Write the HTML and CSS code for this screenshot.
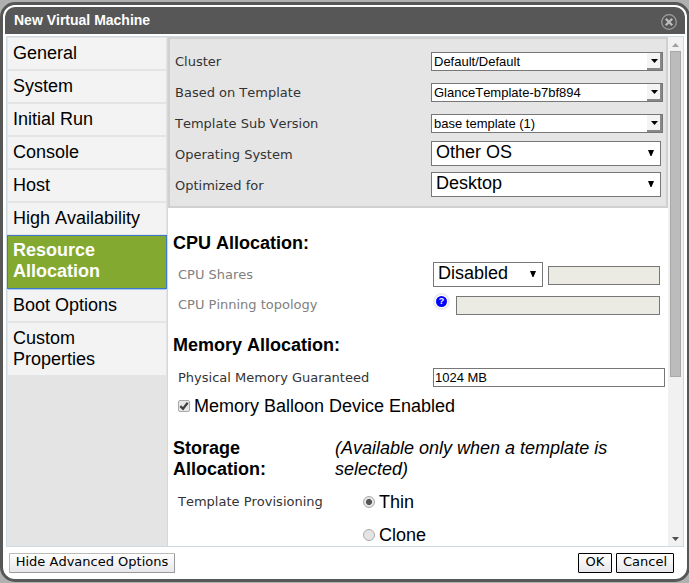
FILE: index.html
```html
<!DOCTYPE html>
<html lang="en">
<head>
<meta charset="utf-8">
<title>New Virtual Machine</title>
<link rel="stylesheet" href="styles.css">
</head>
<body>
<div class="dialog">
  <header class="titlebar">
    <span class="title">New Virtual Machine</span>
    <svg class="close" width="16" height="16" viewBox="0 0 16 16"><circle cx="8" cy="8" r="7.3" fill="#555" stroke="#a0a0a0" stroke-width="1.2"/><path d="M4.8 4.8l6.4 6.4M11.2 4.8l-6.4 6.4" stroke="#bdbdbd" stroke-width="2.3"/></svg>
  </header>
  <div class="content">
    <nav class="sidebar">
      <div class="tab">General</div>
      <div class="tab">System</div>
      <div class="tab">Initial Run</div>
      <div class="tab">Console</div>
      <div class="tab">Host</div>
      <div class="tab">High Availability</div>
      <div class="tab active">Resource<br>Allocation</div>
      <div class="tab">Boot Options</div>
      <div class="tab">Custom<br>Properties</div>
    </nav>
    <main class="main">
      <section class="general">
        <div class="row"><span class="label">Cluster</span><div class="combo"><span>Default/Default</span><i class="drop"><svg width="7" height="4"><path d="M0 0h7L3.5 4z"/></svg></i></div></div>
        <div class="row"><span class="label">Based on Template</span><div class="combo"><span>GlanceTemplate-b7bf894</span><i class="drop"><svg width="7" height="4"><path d="M0 0h7L3.5 4z"/></svg></i></div></div>
        <div class="row"><span class="label">Template Sub Version</span><div class="combo"><span>base template (1)</span><i class="drop"><svg width="7" height="4"><path d="M0 0h7L3.5 4z"/></svg></i></div></div>
        <div class="row"><span class="label">Operating System</span><div class="select"><span>Other OS</span><svg width="6" height="6"><path d="M0 0h6L3.5 6h-1z"/></svg></div></div>
        <div class="row"><span class="label">Optimized for</span><div class="select"><span>Desktop</span><svg width="6" height="6"><path d="M0 0h6L3.5 6h-1z"/></svg></div></div>
      </section>
      <section class="details">
        <h3 class="heading">CPU Allocation:</h3>
        <div class="field shares"><span class="label muted">CPU Shares</span><div class="select small"><span>Disabled</span><svg width="6" height="6"><path d="M0 0h6L3.5 6h-1z"/></svg></div><div class="input disabled narrow"></div></div>
        <div class="field pinning"><span class="label muted">CPU Pinning topology</span><span class="help"><b>?</b></span><div class="input disabled wide"></div></div>
        <h3 class="heading memory">Memory Allocation:</h3>
        <div class="field guaranteed"><span class="label">Physical Memory Guaranteed</span><div class="input">1024 MB</div></div>
        <div class="check"><span class="box"><svg width="10" height="10" viewBox="0 0 10 10"><path d="M1.3 5.2L4 7.8 8.7 1.8" fill="none" stroke="#404040" stroke-width="2.3"/></svg></span>Memory Balloon Device Enabled</div>
        <div class="storage"><h3 class="heading">Storage<br>Allocation:</h3><em>(Available only when a template is<br>selected)</em></div>
        <div class="provision">
          <span class="label">Template Provisioning</span>
          <div class="options"><div class="option"><span class="radio on"></span>Thin</div><div class="option"><span class="radio"></span>Clone</div></div>
        </div>
      </section>
    </main>
    <div class="scrollbar">
      <svg width="7" height="4"><path d="M0 4L3.5 0 7 4z" fill="#a0a0a0"/></svg>
      <div class="thumb"></div>
      <svg class="down" width="7" height="4"><path d="M0 0h7L3.5 4z" fill="#505050"/></svg>
    </div>
  </div>
  <footer class="footer">
    <div class="button advanced">Hide Advanced Options</div>
    <div class="button ok">OK</div>
    <div class="button cancel">Cancel</div>
  </footer>
</div>
</body>
</html>
```

FILE: styles.css
```css
* { box-sizing: border-box; }
html, body { margin: 0; height: 583px; overflow: hidden; }
body { padding-top: 2px; background: #b0b0b0; font: 18px/21px "Liberation Sans", Arial, sans-serif; color: #000; font-kerning: none; }
svg { display: block; flex: none; }
.dialog { width: 690px; height: 580px; padding: 2px; border: 3px solid #575757; border-radius: 15px; background: #fff; }
.titlebar { display: flex; align-items: center; justify-content: space-between; height: 27px; padding: 1px 8px 0 9px; background: #575757; border-radius: 10px 10px 0 0; color: #fff; }
.title { font-size: 14px; font-weight: bold; line-height: 24px; margin-top: -2px; }
.close { margin-top: 2px; }
.content { display: flex; width: 678px; height: 511px; margin: 2px 0 0 1px; border: 1px solid #cfd9e0; overflow: hidden; }
.sidebar { width: 161px; flex: none; padding: 1px 1px 0; background: #e4e4e4; border-right: 1px solid #cfd9e0; }
.tab { height: 33px; padding: 5px 0 0 5px; background: #f3f3f3; border-bottom: 2px solid #e4e4e4; }
.tab.active { height: 54px; margin: -1px -1px 0; padding: 4px 0 0 5px; background: #83a931; border: 1px solid #3f78c8; color: #fff; font-weight: bold; }
.tab.active + .tab { height: 34px; border-top: 1px solid #a9c8f0; margin: 0; }
.tab:last-child { height: 52px; border: 0; }
.main { width: 500px; flex: none; overflow: hidden; }
.general { height: 171px; padding: 7px 0 0 5px; background: #e5e5e5; border: 2px solid #d0d0d0; }
.row { display: flex; align-items: center; height: 31px; }
.row .label { width: 256px; }
.label { flex: none; font: 13px/16px "DejaVu Sans", Verdana, sans-serif; font-kerning: none; color: #333; }
.label.muted { color: #808080; }
.combo { display: flex; justify-content: space-between; width: 232px; height: 19px; padding-left: 2px; background: #fff; border: 1px solid #777; font-size: 13px; line-height: 17px; }
.drop { display: flex; align-items: center; justify-content: center; width: 15px; height: 17px; padding-left: 2px; background: #f4f4f2; border-right: 2px solid #888; border-bottom: 2px solid #888; }
.select { display: flex; align-items: center; justify-content: space-between; width: 230px; height: 25px; padding: 0 6px 0 4px; background: #fff; border: 1px solid #777; }
.select span { line-height: 21px; margin-top: -2px; }
.select svg { margin-top: -2px; }
.row .select { margin-top: -2px; }
.details { padding: 25px 0 0 5px; }
.heading { margin: 0; font-size: 18px; line-height: 21px; font-weight: bold; }
.field { display: flex; align-items: center; padding-left: 5px; }
.field .label { width: 255px; }
.shares { height: 25px; margin-top: 8px; }
.select.small { width: 110px; }
.input { width: 232px; height: 19px; padding-left: 1px; border: 1px solid #777; background: #fff; font-size: 13px; line-height: 18px; }
.input.disabled { height: 19px; background: #ebebe4; }
.narrow { width: 112px; margin-left: 5px; margin-top: 2px; }
.pinning { height: 19px; margin-top: 9px; }
.pinning .label { margin-top: -2px; }
.help { display: flex; align-items: center; justify-content: center; width: 17px; height: 17px; margin: -8px 6px 0 0; border: 2px solid #ebebeb; border-radius: 50%; }
.help b { width: 11px; height: 11px; border-radius: 50%; background: #00f; color: #fff; font-size: 9px; line-height: 11px; text-align: center; flex: none; }
.input.wide { width: 204px; }
.memory { margin-top: 20px; }
.guaranteed { height: 19px; margin-top: 12px; }
.check { display: flex; align-items: center; height: 21px; margin-top: 9px; padding-left: 5px; }
.box { display: flex; align-items: center; justify-content: center; width: 12px; height: 12px; margin: -1px 4px 0 0; border: 1px solid #aaa; border-radius: 2px; background: #e8e8e8; }
.storage { display: flex; margin-top: 21px; }
.storage .heading { width: 162px; }
.provision { display: flex; margin-top: 12px; padding-left: 5px; }
.provision .label { width: 185px; margin-top: 2px; }
.option { display: flex; align-items: center; height: 21px; margin-bottom: 12px; }
.radio { width: 12px; height: 12px; margin: -1px 4px 0 0; border: 1px solid #aaa; border-radius: 50%; background: #e4e4e4; }
.radio.on { background: radial-gradient(circle, #555 0 2.7px, #e4e4e4 3.3px); }
.scrollbar { display: flex; flex-direction: column; align-items: center; flex: 1; padding: 6px 0 5px; background: #f1f1f1; }
.thumb { width: 11px; height: 326px; margin-top: 4px; background: #bcbcbc; border: 1px solid #a8a8a8; }
.down { margin-top: auto; }
.footer { display: flex; width: 678px; margin-top: 6px; padding: 0 9px 0 4px; }
.button { height: 20px; border: 1px solid #000; border-radius: 1px; background: linear-gradient(#fff, #e7e7ec); font: 13px/16px "DejaVu Sans", Verdana, sans-serif; font-kerning: none; text-align: center; }
.advanced { width: 166px; margin-right: auto; border-color: #bbb #999 #999 #bbb; }
.ok { width: 34px; margin-right: 4px; }
.cancel { width: 58px; }
```
